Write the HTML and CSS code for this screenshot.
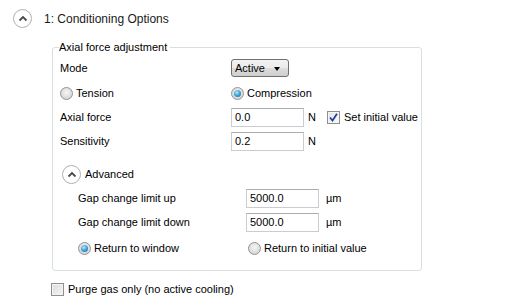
FILE: index.html
```html
<!DOCTYPE html>
<html lang="en">
<head>
    <meta charset="UTF-8">
    <title>Conditioning Options</title>
    <link rel="stylesheet" href="styles.css">
</head>
<body>
    <div class="panel">
        <div class="section-header">
            <span class="collapse-btn">
                <svg width="10" height="7" viewBox="0 0 10 7"><path d="M1.5 5.5 L5 2 L8.5 5.5" fill="none" stroke="#4a4a4a" stroke-width="1.8"/></svg>
            </span>
            <span class="section-title">1: Conditioning Options</span>
        </div>

        <fieldset class="group">
            <legend>Axial force adjustment</legend>

            <div class="row">
                <span class="label">Mode</span>
                <span class="dropdown">Active <span class="arrow"></span></span>
            </div>

            <div class="row mode-options">
                <label class="option"><span class="radio"></span>Tension</label>
                <label class="option"><span class="radio checked"></span>Compression</label>
            </div>

            <div class="row">
                <span class="label">Axial force</span>
                <span class="textbox">0.0</span>
                <span class="unit">N</span>
                <label class="check-option"><span class="checkbox checked">
                    <svg width="9" height="9" viewBox="0 0 9 9"><path d="M1 4.5 L3.5 7.5 L8 0.8" fill="none" stroke="#1e3d9e" stroke-width="1.7"/></svg>
                </span>Set initial value</label>
            </div>

            <div class="row">
                <span class="label">Sensitivity</span>
                <span class="textbox">0.2</span>
                <span class="unit">N</span>
            </div>

            <div class="advanced">
                <div class="row advanced-header">
                    <span class="collapse-btn">
                        <svg width="10" height="7" viewBox="0 0 10 7"><path d="M1.5 5.5 L5 2 L8.5 5.5" fill="none" stroke="#4a4a4a" stroke-width="1.8"/></svg>
                    </span>
                    <span>Advanced</span>
                </div>
                <div class="sub">
                    <div class="row">
                        <span class="label">Gap change limit up</span>
                        <span class="textbox">5000.0</span>
                        <span class="unit um">µm</span>
                    </div>
                    <div class="row">
                        <span class="label">Gap change limit down</span>
                        <span class="textbox">5000.0</span>
                        <span class="unit um">µm</span>
                    </div>
                    <div class="row return-row">
                        <label class="option"><span class="radio checked"></span>Return to window</label>
                        <label class="option"><span class="radio"></span>Return to initial value</label>
                    </div>
                </div>
            </div>
        </fieldset>

        <label class="purge"><span class="checkbox"></span>Purge gas only (no active cooling)</label>
    </div>
</body>
</html>
```

FILE: styles.css
```css
body {
    margin: 0;
    background: #ffffff;
    font-family: "Liberation Sans", Arial, sans-serif;
    font-size: 11px;
    color: #000000;
}

.panel {
    padding: 9px 0 0 13px;
}

.section-header {
    display: flex;
    align-items: center;
    height: 19px;
}

.collapse-btn {
    width: 17px;
    height: 17px;
    border: 1px solid #b0b0b0;
    border-radius: 50%;
    background: #ffffff;
    display: flex;
    align-items: center;
    justify-content: center;
    box-sizing: content-box;
}

.section-title {
    margin-left: 12px;
    font-size: 12px;
    color: #1a1a1a;
}

.group {
    margin: 13px 0 0 39px;
    width: 370px;
    padding: 0 0 10px 7px;
    border: 1px solid #d5dfe5;
    border-radius: 3px;
    box-sizing: border-box;
}

.group legend {
    padding: 0 3px 0 0;
    margin-left: -1px;
    line-height: 13px;
}

.row {
    display: flex;
    align-items: center;
    height: 24px;
}

.group > .row:first-of-type {
    margin-top: 2px;
}

.mode-options {
    margin-top: 1px;
}

.label {
    width: 171px;
}

.option {
    width: 171px;
    display: flex;
    align-items: center;
}

.radio {
    width: 11px;
    height: 11px;
    border: 1px solid #939393;
    border-radius: 50%;
    background: radial-gradient(circle at 50% 40%, #f6f6f6 0%, #d8d8d8 70%, #c8c8c8 100%);
    margin-right: 3px;
    position: relative;
}

.radio.checked::after {
    content: "";
    position: absolute;
    left: 2px;
    top: 2px;
    width: 7px;
    height: 7px;
    border-radius: 50%;
    background: radial-gradient(circle at 40% 35%, #b8e6fb 0%, #3ea2d8 50%, #1a5f98 100%);
}

.dropdown {
    width: 53px;
    height: 16px;
    border: 1px solid #707070;
    border-radius: 3px;
    background: linear-gradient(#f2f2f2 0%, #ebebeb 50%, #dddddd 51%, #cfcfcf 100%);
    display: flex;
    align-items: center;
    padding-left: 3px;
    box-sizing: content-box;
    position: relative;
}

.dropdown .arrow {
    position: absolute;
    right: 8px;
    top: 7px;
    border-left: 3px solid transparent;
    border-right: 3px solid transparent;
    border-top: 4px solid #000000;
}

.textbox {
    width: 68px;
    height: 17px;
    border: 1px solid #c9ccd3;
    border-top-color: #abadb3;
    padding-left: 3px;
    display: flex;
    align-items: center;
    line-height: 17px;
}

.unit {
    margin-left: 4px;
}

.unit.um {
    margin-left: 7px;
}

.check-option {
    display: flex;
    align-items: center;
    margin-left: 11px;
}

.checkbox {
    width: 11px;
    height: 11px;
    border: 1px solid #8e8f8f;
    background: linear-gradient(135deg, #dcdcdc 0%, #f4f4f4 100%);
    box-shadow: inset 0 0 0 1px #f4f4f4;
    margin-right: 4px;
    display: flex;
    align-items: center;
    justify-content: center;
}

.checkbox.checked {
    background: linear-gradient(135deg, #e4e4e4 0%, #fafafa 100%);
}

.advanced {
    margin-top: 9px;
}

.advanced-header {
    padding-left: 2px;
}

.advanced-header .collapse-btn {
    margin-right: 4px;
}

.sub {
    padding-left: 18px;
}

.sub .label {
    width: 168px;
}

.return-row {
    margin-top: 2px;
}

.sub .option {
    width: 170px;
}

.purge {
    display: flex;
    align-items: center;
    margin: 11px 0 0 38px;
    height: 14px;
}
```
